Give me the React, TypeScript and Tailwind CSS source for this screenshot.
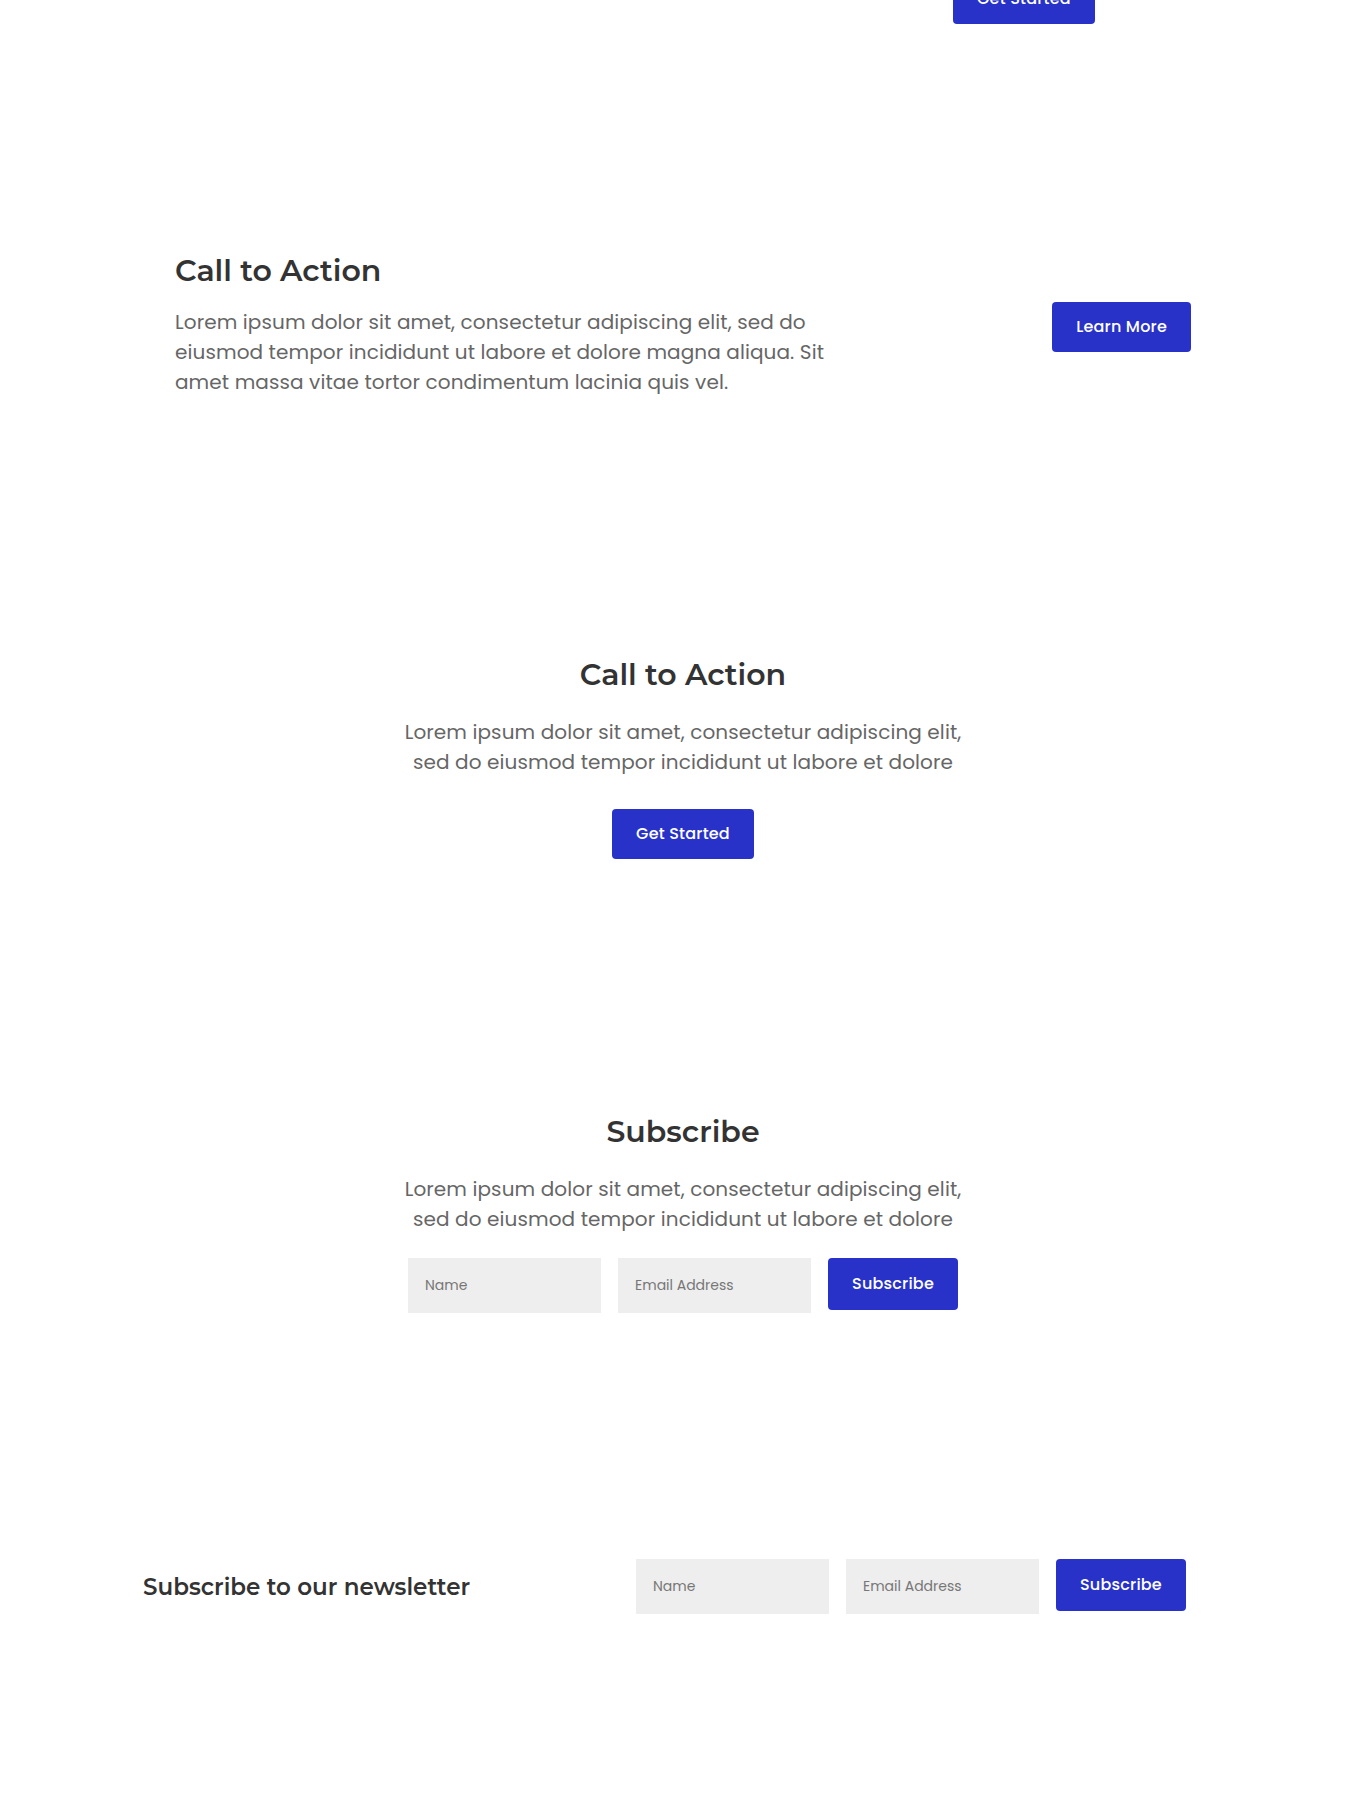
import React from "react";

const heading = "font-['Montserrat','Inter',sans-serif] text-[#333333] font-semibold";
const body = "font-['Poppins','Open_Sans',sans-serif] text-[#666666] text-[20px] leading-[30px] tracking-[0.1px]";
const btn =
  "inline-flex items-center justify-center h-[50px] px-6 rounded-[4px] bg-[#2832c8] text-white text-[16px] font-medium font-['Poppins','Open_Sans',sans-serif] tracking-[0.2px]";
const input =
  "h-[55px] w-[193px] bg-[#eeeeee] px-[17px] text-[14px] text-[#333] placeholder:text-[#777777] font-['Poppins','Open_Sans',sans-serif] outline-none";

function SubscribeForm() {
  return (
    <form className="flex items-start gap-[17px]" onSubmit={(e) => e.preventDefault()}>
      <input className={input} placeholder="Name" />
      <input className={input} placeholder="Email Address" />
      <button type="submit" className={btn + " h-[52px]"}>
        Subscribe
      </button>
    </form>
  );
}

export default function App() {
  return (
    <div className="min-h-[1800px] bg-white">
      {/* tail of previous section */}
      <div className="mx-auto w-[1016px] -mt-[26px]">
        <div className="ml-[778px]">
          <a href="#" className={btn}>
            Get Started
          </a>
        </div>
      </div>

      {/* CTA split */}
      <section className="mx-auto w-[1016px] pt-[229px] flex items-center justify-between">
        <div className="w-[660px]">
          <h2 className={heading + " text-[30px] leading-[36px]"}>Call to Action</h2>
          <p className={body + " mt-[18px]"}>
            Lorem ipsum dolor sit amet, consectetur adipiscing elit, sed do eiusmod tempor incididunt ut labore et
            dolore magna aliqua. Sit amet massa vitae tortor condimentum lacinia quis vel.
          </p>
        </div>
        <a href="#" className={btn + " mt-[4px]"}>
          Learn More
        </a>
      </section>

      {/* CTA centered */}
      <section className="pt-[260px] flex flex-col items-center text-center">
        <h2 className={heading + " text-[30px] leading-[36px]"}>Call to Action</h2>
        <p className={body + " mt-[24px] w-[580px]"}>
          Lorem ipsum dolor sit amet, consectetur adipiscing elit, sed do eiusmod tempor incididunt ut labore et dolore
        </p>
        <a href="#" className={btn + " mt-[32px]"}>
          Get Started
        </a>
      </section>

      {/* Subscribe centered */}
      <section className="pt-[255px] flex flex-col items-center text-center">
        <h2 className={heading + " text-[30px] leading-[36px]"}>Subscribe</h2>
        <p className={body + " mt-[24px] w-[580px]"}>
          Lorem ipsum dolor sit amet, consectetur adipiscing elit, sed do eiusmod tempor incididunt ut labore et dolore
        </p>
        <div className="mt-[24px]">
          <SubscribeForm />
        </div>
      </section>

      {/* Newsletter row */}
      <section className="mx-auto w-[1080px] pt-[246px] flex items-center">
        <h3 className={heading + " w-[493px] text-[23px] leading-[28px]"}>Subscribe to our newsletter</h3>
        <SubscribeForm />
      </section>
    </div>
  );
}
